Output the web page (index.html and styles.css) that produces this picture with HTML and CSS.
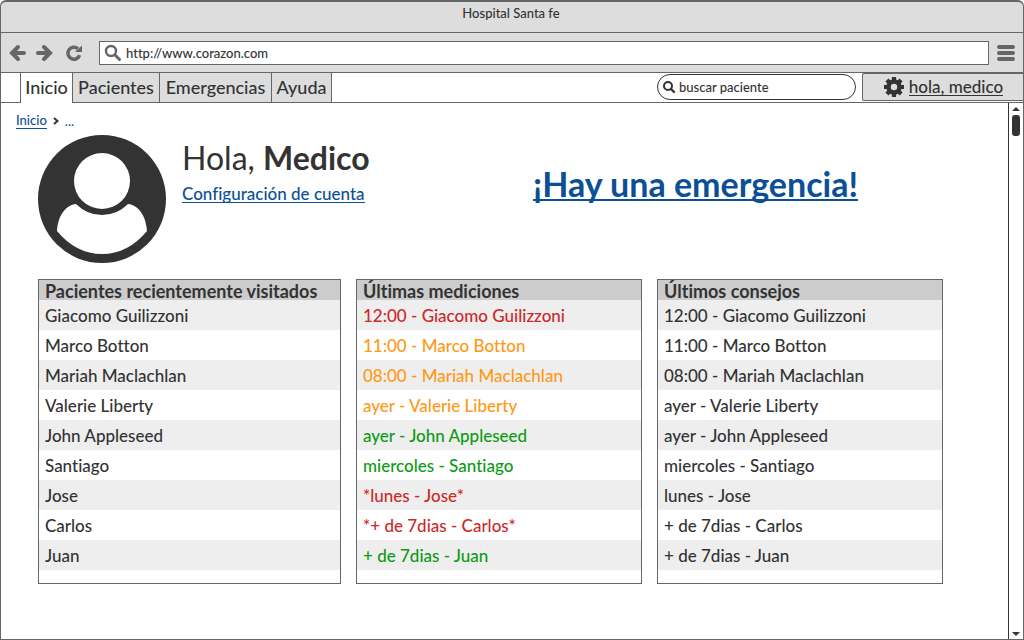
FILE: index.html
```html
<!DOCTYPE html>
<html lang="es">
<head>
<meta charset="utf-8">
<meta name="viewport" content="width=device-width, initial-scale=1">
<title>Hospital Santa fe</title>
<link rel="stylesheet" href="styles.css">
</head>
<body>
<div class="window">
  <header class="titlebar">Hospital Santa fe</header>
  <div class="toolbar">
    <button class="icon-btn" type="button" aria-label="Atrás"><svg width="18" height="18" viewBox="0 0 18 18"><path d="M9 3 3 9l6 6M4 9h11" fill="none" stroke="currentColor" stroke-width="4" stroke-linecap="round" stroke-linejoin="miter"/></svg></button>
    <button class="icon-btn" type="button" aria-label="Adelante"><svg width="18" height="18" viewBox="0 0 18 18"><path d="m9 3 6 6-6 6M14 9H3" fill="none" stroke="currentColor" stroke-width="4" stroke-linecap="round" stroke-linejoin="miter"/></svg></button>
    <button class="icon-btn reload" type="button" aria-label="Recargar"><svg width="18" height="18" viewBox="0 0 18 18"><path d="M13 4.800A6 6 0 1 0 14.600 11.200" fill="none" stroke="currentColor" stroke-width="3.500"/><path d="M17 1.500V8H10z" fill="currentColor"/></svg></button>
    <label class="address">
      <svg width="18" height="18" viewBox="0 0 18 18" aria-hidden="true"><circle cx="7" cy="7" r="5" fill="none" stroke="currentColor" stroke-width="2.400"/><path d="m11 11 4.500 4.500" stroke="currentColor" stroke-width="3" stroke-linecap="round"/></svg>
      <input type="text" aria-label="Dirección" value="http://www.corazon.com">
    </label>
    <button class="icon-btn menu" type="button" aria-label="Menú"><svg width="18" height="18" viewBox="0 0 18 18"><path d="M2 3h14M2 9h14M2 15h14" stroke="currentColor" stroke-width="4" stroke-linecap="round"/></svg></button>
  </div>
  <div class="navbar">
    <nav class="tabs">
      <a class="tab tab-active" href="#inicio" aria-current="page">Inicio</a>
      <a class="tab tab-medium" href="#pacientes">Pacientes</a>
      <a class="tab tab-wide" href="#emergencias">Emergencias</a>
      <a class="tab tab-small" href="#ayuda">Ayuda</a>
    </nav>
    <label class="search">
      <svg width="14" height="14" viewBox="0 0 14 14" aria-hidden="true"><circle cx="6" cy="6" r="4" fill="none" stroke="currentColor" stroke-width="2"/><path d="m9 9 3 3" stroke="currentColor" stroke-width="2.400" stroke-linecap="round"/></svg>
      <input type="text" aria-label="Buscar paciente" placeholder="buscar paciente">
    </label>
    <a class="user" href="#perfil">
      <svg width="22" height="22" viewBox="0 0 22 22" aria-hidden="true"><circle cx="11" cy="11" r="5.500" fill="none" stroke="currentColor" stroke-width="4.500"/><path d="M11 1v4M11 17v4M1 11h4M17 11h4M3.900 3.900l3 3M15.100 15.100l3 3M3.900 18.100l3-3M15.100 6.900l3-3" stroke="currentColor" stroke-width="4.200"/></svg>
      <span>hola, medico</span>
    </a>
  </div>
  <div class="viewport">
    <main class="page">
      <nav class="crumbs" aria-label="Ruta"><a class="link" href="#inicio">Inicio</a><svg width="6" height="8" viewBox="0 0 6 8" aria-hidden="true"><path d="m1 1 3.500 3L1 7" fill="none" stroke="currentColor" stroke-width="2"/></svg><span class="more">...</span></nav>
      <section class="hero">
        <svg class="avatar" width="128" height="128" viewBox="0 0 128 128" role="img" aria-label="Medico"><circle cx="64" cy="64" r="64" fill="#333"/><circle cx="64" cy="46" r="28" fill="#fff"/><path d="M38 69C28 70 20 80 19 96Q38 119 64 119T109 96C108 80 100 70 90 69Q79 80 64 80T38 69z" fill="#fff"/></svg>
        <div class="greeting">
          <h1>Hola, <strong>Medico</strong></h1>
          <a class="link" href="#configuracion">Configuración de cuenta</a>
        </div>
        <a class="alert link" href="#emergencia">¡Hay una emergencia!</a>
      </section>
      <div class="lists">
        <div class="card"><table>
          <thead><tr><th scope="col">Pacientes recientemente visitados</th></tr></thead>
          <tbody>
            <tr><td>Giacomo Guilizzoni</td></tr>
            <tr><td>Marco Botton</td></tr>
            <tr><td>Mariah Maclachlan</td></tr>
            <tr><td>Valerie Liberty</td></tr>
            <tr><td>John Appleseed</td></tr>
            <tr><td>Santiago</td></tr>
            <tr><td>Jose</td></tr>
            <tr><td>Carlos</td></tr>
            <tr><td>Juan</td></tr>
          </tbody>
        </table></div>
        <div class="card"><table>
          <thead><tr><th scope="col">Últimas mediciones</th></tr></thead>
          <tbody>
            <tr class="high"><td>12:00 - Giacomo Guilizzoni</td></tr>
            <tr class="medium"><td>11:00 - Marco Botton</td></tr>
            <tr class="medium"><td>08:00 - Mariah Maclachlan</td></tr>
            <tr class="medium"><td>ayer - Valerie Liberty</td></tr>
            <tr class="normal"><td>ayer - John Appleseed</td></tr>
            <tr class="normal"><td>miercoles - Santiago</td></tr>
            <tr class="high"><td>*lunes - Jose*</td></tr>
            <tr class="high"><td>*+ de 7dias - Carlos*</td></tr>
            <tr class="normal"><td>+ de 7dias - Juan</td></tr>
          </tbody>
        </table></div>
        <div class="card"><table>
          <thead><tr><th scope="col">Últimos consejos</th></tr></thead>
          <tbody>
            <tr><td>12:00 - Giacomo Guilizzoni</td></tr>
            <tr><td>11:00 - Marco Botton</td></tr>
            <tr><td>08:00 - Mariah Maclachlan</td></tr>
            <tr><td>ayer - Valerie Liberty</td></tr>
            <tr><td>ayer - John Appleseed</td></tr>
            <tr><td>miercoles - Santiago</td></tr>
            <tr><td>lunes - Jose</td></tr>
            <tr><td>+ de 7dias - Carlos</td></tr>
            <tr><td>+ de 7dias - Juan</td></tr>
          </tbody>
        </table></div>
      </div>
    </main>
    <div class="scrollbar" aria-hidden="true">
      <svg width="8" height="4" viewBox="0 0 8 4"><path d="M4 0l4 4H0z" fill="currentColor"/></svg>
      <div class="thumb"></div>
      <svg width="8" height="4" viewBox="0 0 8 4"><path d="M4 4l4-4H0z" fill="currentColor"/></svg>
    </div>
  </div>
</div>
</body>
</html>
```
FILE: styles.css
```css
* { box-sizing: border-box; }

body {
  margin: 0;
  background: #fff;
  color: #333;
  font: 500 17px/20px Lato, "Open Sans", sans-serif;
  font-variant-ligatures: none;
}

input { min-width: 0; flex: 1; padding: 0; border: 0; outline: 0; background: none; color: inherit; font: inherit; }
input::placeholder { color: #333; opacity: 1; }
svg { flex: none; }

.window {
  display: flex;
  flex-direction: column;
  min-height: 100vh;
  border: 1px solid #666;
  border-top-width: 2px;
  border-radius: 6px 6px 0 0;
  background: #ddd;
}

.titlebar {
  height: 31px;
  padding: 1px 2px 0 0;
  border-bottom: 1px solid #666;
  font-size: 13px;
  text-align: center;
}

.toolbar {
  display: flex;
  align-items: center;
  gap: 8px;
  height: 40px;
  padding: 0 8px;
  border-bottom: 1px solid #666;
  color: #666;
}

.icon-btn { display: flex; padding: 0; border: 0; background: none; color: inherit; }
.reload { margin: 0 8px 0 4px; }

.address {
  display: flex;
  flex: 1;
  align-items: center;
  gap: 4px;
  height: 24px;
  padding: 0 4px;
  border: 1px solid #666;
  background: #fff;
}
.address input { color: #333; font-size: 13px; }

.navbar { display: flex; height: 30px; background: #fff; border-bottom: 1px solid #666; }

.tabs { display: flex; flex: 1; height: 30px; padding-left: 19px; border-bottom: 1px solid #666; }

.tab {
  min-width: 60px;
  height: 30px;
  padding-top: 4px;
  border: solid #666;
  border-width: 0 1px 1px 0;
  background: #ddd;
  color: #333;
  font-size: 18px;
  text-align: center;
  text-decoration: none;
}
.tab-active { min-width: 53px; border-width: 0 1px; background: #fff; }
.tab-medium { min-width: 87px; }
.tab-wide { min-width: 112px; }

.search {
  display: flex;
  align-items: center;
  gap: 3px;
  width: 199px;
  height: 26px;
  margin: 1px 6px 0 0;
  padding: 0 4px;
  border: 1px solid #333;
  border-radius: 13px;
  font-size: 13px;
}

.user {
  display: flex;
  align-items: center;
  justify-content: center;
  gap: 4px;
  width: 161px;
  height: 28px;
  border: 1px solid #666;
  border-right: 0;
  border-radius: 2px 0 0 2px;
  background: #ddd;
  color: #333;
  font-size: 17px;
  text-decoration: none;
}
.user span { border-bottom: 1px solid #333; line-height: 16px; }

.viewport { display: flex; flex: 1; background: #fff; }
.page { flex: 1; min-width: 0; padding: 8px 0 40px 15px; }

.link { color: #0b4f96; text-decoration: none; border-bottom: 1px solid #0b4f96; }

.crumbs { display: flex; align-items: center; gap: 6px; height: 20px; font-size: 13px; line-height: 16px; }
.crumbs .link { line-height: 15px; }
.more { color: #0b4f96; }

.hero { display: flex; align-items: flex-start; padding: 4px 0 0 22px; }

.greeting { width: 367px; padding: 5px 0 0 16px; line-height: 16px; }
.greeting h1 { margin: 0 0 10px; font-size: 32px; font-weight: 400; line-height: 36px; }
.greeting strong { font-weight: 700; }
.greeting .link { display: inline-block; }

.alert { margin-top: 34px; border-bottom-width: 2px; font-size: 34px; font-weight: 700; line-height: 30px; }

.lists { display: grid; grid-template-columns: 303fr 286fr 286fr; gap: 15px; padding: 16px 65px 0 22px; }

.card { padding-bottom: 13px; border: 1px solid #666; }
.card table { width: 100%; border-collapse: collapse; }
.card th { height: 20px; padding: 2px 6px 0; background: #ccc; font-size: 18px; font-weight: 700; line-height: 18px; text-align: left; white-space: nowrap; }
.card td { height: 30px; padding: 2px 6px 0; }
.card tbody tr:nth-child(odd) { background: #eee; }

.high { color: #cc2929; }
.medium { color: #ff9914; }
.normal { color: #0b9b14; }

.scrollbar {
  display: flex;
  flex-direction: column;
  align-items: center;
  width: 15px;
  padding: 4px 0 3px;
  border-left: 1px solid #333;
}
.thumb { width: 8px; height: 21px; margin: 4px 0 auto; border-radius: 3px; background: #333; }
```
